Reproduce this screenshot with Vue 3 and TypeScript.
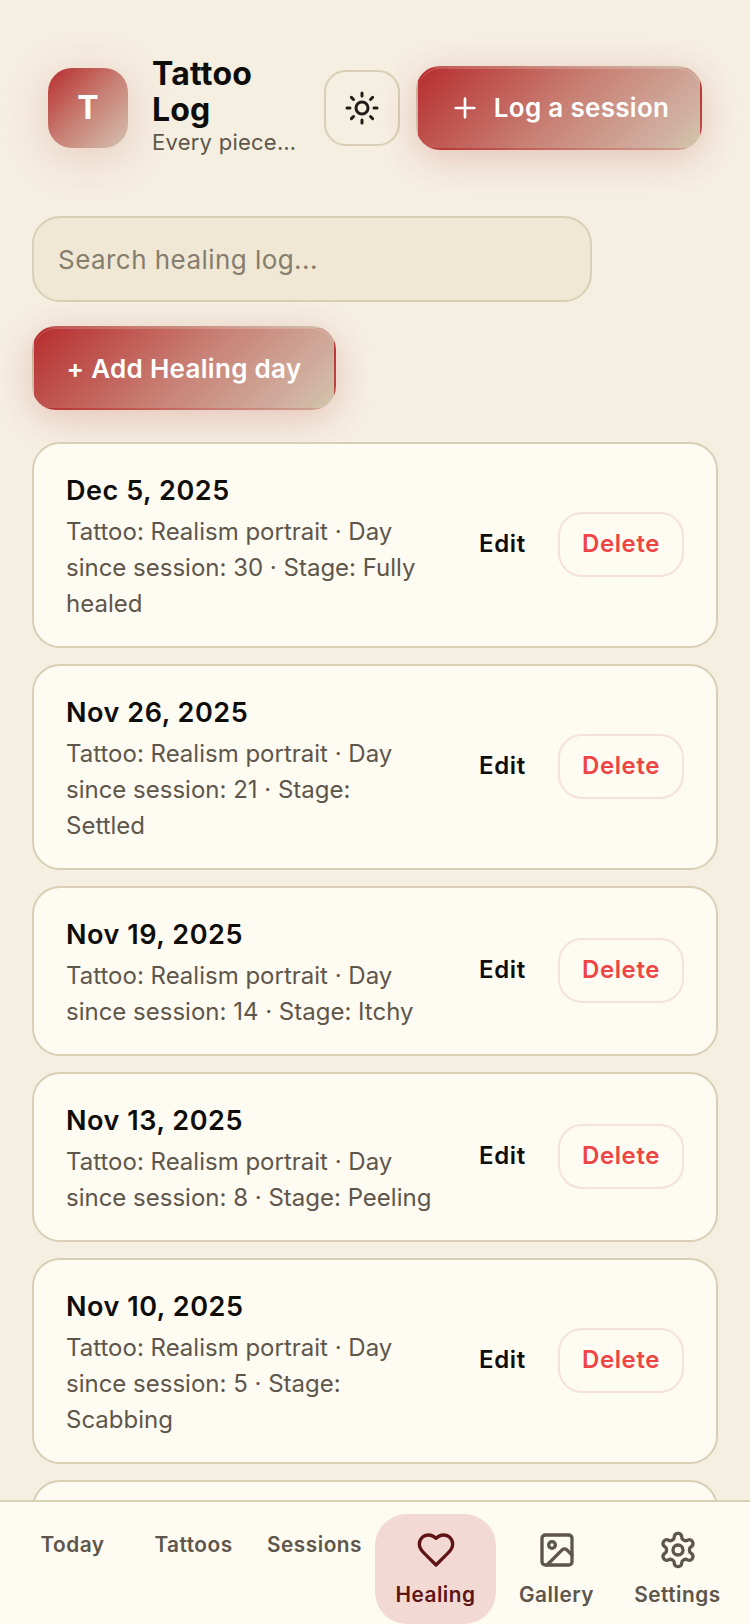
<script setup lang="ts">
interface Entry { date: string; text: string }
const entries: Entry[] = [
  { date: 'Dec 5, 2025', text: 'Tattoo: Realism portrait · Day since session: 30 · Stage: Fully healed' },
  { date: 'Nov 26, 2025', text: 'Tattoo: Realism portrait · Day since session: 21 · Stage: Settled' },
  { date: 'Nov 19, 2025', text: 'Tattoo: Realism portrait · Day since session: 14 · Stage: Itchy' },
  { date: 'Nov 13, 2025', text: 'Tattoo: Realism portrait · Day since session: 8 · Stage: Peeling' },
  { date: 'Nov 10, 2025', text: 'Tattoo: Realism portrait · Day since session: 5 · Stage: Scabbing' },
  { date: 'Nov 7, 2025', text: 'Tattoo: Realism portrait · Day since session: 2 · Stage: Fresh' },
]
</script>

<template>
  <div class="shell">
    <div class="scroll">
      <header class="header">
        <div class="logo">T</div>
        <div class="brand">
          <h1 class="title">Tattoo Log</h1>
          <p class="sub">Every piece tells a story</p>
        </div>
        <button class="sun" type="button" aria-label="Theme">
          <svg width="36" height="36" viewBox="0 0 24 24" fill="none" stroke="currentColor" stroke-width="2" stroke-linecap="round" stroke-linejoin="round">
            <circle cx="12" cy="12" r="4" />
            <path d="M12 2v2M12 20v2M4.93 4.93l1.41 1.41M17.66 17.66l1.41 1.41M2 12h2M20 12h2M6.34 17.66l-1.41 1.41M19.07 4.93l-1.41 1.41" />
          </svg>
        </button>
        <button class="cta log" type="button">
          <svg width="32" height="32" viewBox="0 0 24 24" fill="none" stroke="currentColor" stroke-width="2" stroke-linecap="round" stroke-linejoin="round">
            <path d="M5 12h14M12 5v14" />
          </svg>
          <span>Log a session</span>
        </button>
      </header>

      <main class="main">
        <input class="search" type="text" placeholder="Search healing log..." />
        <button class="cta add" type="button">+ Add Healing day</button>
        <ul class="list">
          <li v-for="e in entries" :key="e.date" class="card">
            <div class="info">
              <div class="date">{{ e.date }}</div>
              <div class="text">{{ e.text }}</div>
            </div>
            <div class="actions">
              <button class="edit" type="button">Edit</button>
              <button class="del" type="button">Delete</button>
            </div>
          </li>
        </ul>
      </main>
    </div>

    <nav class="nav">
      <a class="tab">Today</a>
      <a class="tab">Tattoos</a>
      <a class="tab">Sessions</a>
      <a class="tab active">
        <svg width="40" height="40" viewBox="0 0 24 24" fill="none" stroke="currentColor" stroke-width="2" stroke-linecap="round" stroke-linejoin="round">
          <path d="M19 14c1.49-1.46 3-3.21 3-5.5A5.5 5.5 0 0 0 16.5 3c-1.76 0-3 .5-4.5 2-1.5-1.5-2.74-2-4.5-2A5.5 5.5 0 0 0 2 8.5c0 2.3 1.5 4.05 3 5.5l7 7Z" />
        </svg>
        <span>Healing</span>
      </a>
      <a class="tab">
        <svg width="40" height="40" viewBox="0 0 24 24" fill="none" stroke="currentColor" stroke-width="2" stroke-linecap="round" stroke-linejoin="round">
          <rect x="3" y="3" width="18" height="18" rx="2" />
          <circle cx="9" cy="9" r="2" />
          <path d="m21 15-3.086-3.086a2 2 0 0 0-2.828 0L6 21" />
        </svg>
        <span>Gallery</span>
      </a>
      <a class="tab">
        <svg width="40" height="40" viewBox="0 0 24 24" fill="none" stroke="currentColor" stroke-width="2" stroke-linecap="round" stroke-linejoin="round">
          <path d="M12.22 2h-.44a2 2 0 0 0-2 2v.18a2 2 0 0 1-1 1.73l-.43.25a2 2 0 0 1-2 0l-.15-.08a2 2 0 0 0-2.73.73l-.22.38a2 2 0 0 0 .73 2.73l.15.1a2 2 0 0 1 1 1.72v.51a2 2 0 0 1-1 1.74l-.15.09a2 2 0 0 0-.73 2.73l.22.38a2 2 0 0 0 2.73.73l.15-.08a2 2 0 0 1 2 0l.43.25a2 2 0 0 1 1 1.73V20a2 2 0 0 0 2 2h.44a2 2 0 0 0 2-2v-.18a2 2 0 0 1 1-1.73l.43-.25a2 2 0 0 1 2 0l.15.08a2 2 0 0 0 2.73-.73l.22-.39a2 2 0 0 0-.73-2.73l-.15-.08a2 2 0 0 1-1-1.74v-.5a2 2 0 0 1 1-1.74l.15-.09a2 2 0 0 0 .73-2.73l-.22-.38a2 2 0 0 0-2.73-.73l-.15.08a2 2 0 0 1-2 0l-.43-.25a2 2 0 0 1-1-1.73V4a2 2 0 0 0-2-2z" />
          <circle cx="12" cy="12" r="3" />
        </svg>
        <span>Settings</span>
      </a>
    </nav>
  </div>
</template>

<style>
html, body { margin: 0; background: #f5efe2; }
</style>

<style scoped>
.shell {
  width: 750px;
  height: 1624px;
  display: flex;
  flex-direction: column;
  overflow: hidden;
  background: #f5efe2;
  color: #0f0d0a;
  font-family: Inter, "Noto Sans", sans-serif;
}
.scroll { flex: 1; min-height: 0; overflow: hidden; }
button { font-family: inherit; cursor: pointer; margin: 0; }

.header {
  display: flex;
  align-items: center;
  padding: 55px 48px 0;
  height: 160px;
  box-sizing: border-box;
}
.logo {
  flex: none;
  width: 80px;
  height: 80px;
  border-radius: 24px;
  display: flex;
  align-items: center;
  justify-content: center;
  color: #fff;
  font-size: 32px;
  font-weight: 700;
  background: linear-gradient(135deg, #b83232 3%, #c87f74 50%, #d1b2a2 88%, #d2c7aa 100%);
  box-shadow: 0 8px 48px rgba(184, 50, 50, 0.2);
  margin-right: 24px;
}
.brand { flex: 1; min-width: 0; margin-right: 24px; margin-bottom: 4px; }
.title {
  margin: 0;
  font-size: 32px;
  line-height: 36px;
  font-weight: 700;
  letter-spacing: 0.2px;
  color: #0f0d0a;
}
.sub {
  margin: 0;
  font-size: 22px;
  line-height: 28px;
  color: #5e564a;
  letter-spacing: 0.25px;
  white-space: nowrap;
  overflow: hidden;
  text-overflow: ellipsis;
}
.sun {
  flex: none;
  width: 76px;
  height: 76px;
  border-radius: 22px;
  border: 2px solid #d8cfb4;
  background: transparent;
  color: #1f1c17;
  display: flex;
  align-items: center;
  justify-content: center;
  padding: 0;
  margin-right: 16px;
}
.cta {
  border: 2px solid transparent;
  background: linear-gradient(135deg, #b83232 3%, #c87f74 50%, #d1b2a2 88%, #d2c7aa 100%);
  color: #fff;
  font-size: 26px;
  font-weight: 600;
  letter-spacing: 0.3px;
  box-shadow: 0 8px 36px rgba(184, 50, 50, 0.24), inset 0 1px 0 rgba(255, 255, 255, 0.18);
  border-radius: 24px;
}
.log {
  flex: none;
  width: 286px;
  height: 84px;
  display: flex;
  align-items: center;
  justify-content: center;
  gap: 13px;
  padding: 0;
}
.main {
  padding: 56px 32px 0;
  display: flex;
  flex-direction: column;
  align-items: flex-start;
}
.search {
  width: 560px;
  height: 86px;
  box-sizing: border-box;
  border: 2px solid #d8cfb4;
  border-radius: 28px;
  background: #f0e8d4;
  padding: 0 24px;
  font-family: inherit;
  font-size: 26px;
  letter-spacing: 0.45px;
  color: #0f0d0a;
  outline: none;
}
.search::placeholder { color: #857d6e; opacity: 1; }
.add {
  margin-top: 24px;
  height: 84px;
  width: 304px;
  padding: 0;
}
.list {
  list-style: none;
  margin: 32px 0 0;
  padding: 0;
  width: 100%;
  display: flex;
  flex-direction: column;
  gap: 16px;
}
.card {
  display: flex;
  align-items: center;
  box-sizing: border-box;
  border: 2px solid #d8cfb4;
  border-radius: 28px;
  background: #fefbf3;
  padding: 26px 32px;
  gap: 14px;
}
.info { flex: 1; min-width: 0; }
.date {
  font-size: 27px;
  line-height: 39px;
  font-weight: 600;
  letter-spacing: 0.55px;
  padding-top: 1px;
  margin-bottom: 4px;
}
.text { font-size: 24px; line-height: 36px; color: #5e564a; margin-bottom: -2px; }
.actions { flex: none; display: flex; align-items: center; gap: 0; margin-top: -2px; }
.edit {
  border: none;
  background: transparent;
  color: #0f0d0a;
  font-size: 24px;
  font-weight: 600;
  letter-spacing: 0.7px;
  padding: 0 32px 2px 30px;
  height: 65px;
}
.del {
  box-sizing: border-box;
  width: 126px;
  height: 65px;
  border: 2px solid #f5e2da;
  border-radius: 24px;
  background: transparent;
  color: #ef4444;
  font-size: 24px;
  font-weight: 600;
  letter-spacing: 0.6px;
  padding: 0 0 2px;
}
.nav {
  flex: none;
  height: 124px;
  box-sizing: border-box;
  border-top: 2px solid #d8cfb4;
  background: #fefbf3;
  padding: 12px 12px 0;
  display: grid;
  grid-template-columns: repeat(6, 1fr);
  align-items: start;
}
.tab {
  display: flex;
  flex-direction: column;
  align-items: center;
  gap: 10px;
  padding-top: 16px;
  font-size: 20.8px;
  line-height: 30px;
  font-weight: 600;
  letter-spacing: 0.5px;
  color: #5e564a;
}
.tab svg { display: block; }
.tab.active {
  height: 110px;
  box-sizing: border-box;
  background: #f3d9d3;
  border-radius: 32px;
  color: #5e1414;
}
</style>
